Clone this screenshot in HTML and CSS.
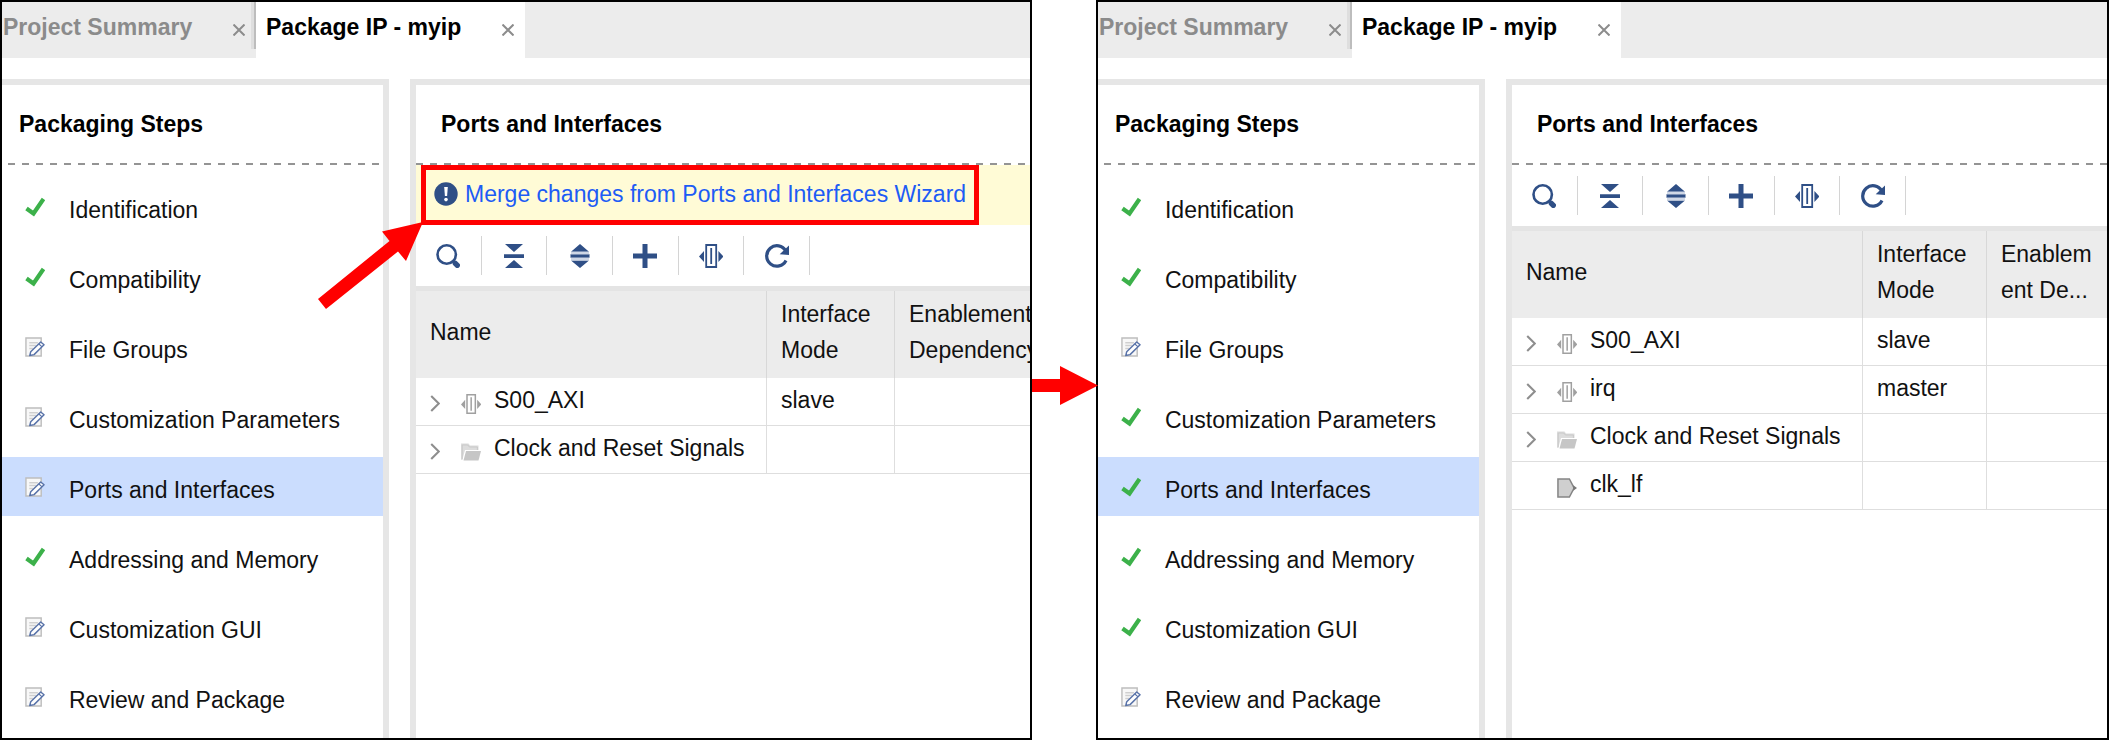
FILE: index.html
```html
<!DOCTYPE html>
<html lang="en">
<head>
<meta charset="utf-8">
<title>Package IP - myip</title>
<link rel="stylesheet" href="styles.css">
</head>
<body>
<svg class="sprite" aria-hidden="true">
  <symbol id="i-close" viewBox="0 0 12 12"><path d="M.5 .5l11 11M11.500 .5L.5 11.500" fill="none" stroke="#8c8c8c" stroke-width="2"/></symbol>
  <symbol id="i-check" viewBox="0 0 20 20"><path d="M1.500 11.500L8.500 16.500L18.500 2" fill="none" stroke="#3cb14a" stroke-width="4.200"/></symbol>
  <symbol id="i-edit" viewBox="0 0 21 21"><path d="M1 1h16v19H1z" fill="#f8f8f8" stroke="#bdbdbd" stroke-width="1.500"/><path d="M4.500 6h9M4.500 9h7M4.500 12h4" stroke="#cfcfcf" stroke-width="1.500"/><path d="M16.500 5.200L20 8.200L9.500 18.500L5 19.500L6 15.500z" fill="#fff" stroke="#5872a8" stroke-width="1.500" stroke-linejoin="round"/><path d="M14.500 7.300L18 10.300" stroke="#5872a8" stroke-width="1.200"/></symbol>
  <symbol id="i-info" viewBox="0 0 24 24"><circle cx="12" cy="12" r="11.700" fill="#2f4f86"/><path d="M10.200 5h3.600l-.7 9h-2.200z" fill="#fff"/><circle cx="12" cy="17.600" r="1.800" fill="#fff"/></symbol>
  <symbol id="i-search" viewBox="0 0 24 24"><circle cx="10.700" cy="10.500" r="9.200" fill="none" stroke="#2f4f86" stroke-width="2.600"/><path d="M19.300 19.300l2 2" stroke="#2f4f86" stroke-width="5.400" stroke-linecap="round"/></symbol>
  <symbol id="i-collapse" viewBox="0 0 24 24"><path d="M3 0h18l-9 8zM3 24h18l-9-8zM2 10.300h20v3.700H2z" fill="#2f4f86"/></symbol>
  <symbol id="i-expand" viewBox="0 0 24 24"><path d="M3 7.800L12 0l9 7.800zM3 16.400h18L12 24zM2.500 10.300h19v3.400h-19z" fill="#2f4f86"/><path d="M3 7.800h18v2.500H3zM3 13.700h18v2.700H3z" fill="#cfd7e6"/></symbol>
  <symbol id="i-plus" viewBox="0 0 24 24"><path d="M9.500 0h5v9.500H24v5h-9.500V24h-5v-9.500H0v-5h9.500z" fill="#2f4f86"/></symbol>
  <symbol id="i-port" viewBox="0 0 24 24"><path d="M7.200 1h10v22h-10z" fill="#fff" stroke="currentColor" stroke-width="1.800"/><path d="M12.200 4v16" stroke="currentColor" stroke-width="1.800"/><path d="M5 7v11L0 12.500zM19.400 7v11l5-5.500z" fill="currentColor"/></symbol>
  <symbol id="i-refresh" viewBox="0 0 24 24"><path d="M20.800 7A10.200 10.200 0 1 0 21 16.500" fill="none" stroke="#2f4f86" stroke-width="3.200"/><path d="M24 1.500V11l-9.300-.8z" fill="#2f4f86"/></symbol>
  <symbol id="i-chevron" viewBox="0 0 10 18"><path d="M1 1L9 9L1 17" fill="none" stroke="#8e8e8e" stroke-width="2.200"/></symbol>
  <symbol id="i-folder" viewBox="0 0 20 20"><path d="M0 18V1.500h7.500l1.500 2h8.500V8H4L1.500 17z" fill="#dcdcdc"/><path d="M1.200 17.500V3h5.600l1.600 2h8v3" fill="none" stroke="#c9c9c9"/><path d="M5 9h15l-2.500 9.500H2.500z" fill="#c6c6c6"/></symbol>
  <symbol id="i-pin" viewBox="0 0 21 21"><path d="M1 1h12l5 9.500l-5 9.500H1z" fill="#cfcfcf" stroke="#858585" stroke-width="1.600"/><path d="M17 7.500l4 3l-4 3z" fill="#777"/></symbol>
</svg>

<main class="stage">
  <section class="window before">
    <div class="tabs" role="tablist">
      <div class="tab idle" role="tab"><span>Project Summary</span><button class="close" aria-label="Close Project Summary"><svg><use href="#i-close"/></svg></button></div>
      <div class="tab current" role="tab" aria-selected="true"><span>Package IP - myip</span><button class="close" aria-label="Close Package IP"><svg><use href="#i-close"/></svg></button></div>
    </div>
    <div class="panels">
      <nav class="panel steps">
        <h2>Packaging Steps</h2>
        <ul>
          <li><button class="step"><svg><use href="#i-check"/></svg><span>Identification</span></button></li>
          <li><button class="step"><svg><use href="#i-check"/></svg><span>Compatibility</span></button></li>
          <li><button class="step"><svg><use href="#i-edit"/></svg><span>File Groups</span></button></li>
          <li><button class="step"><svg><use href="#i-edit"/></svg><span>Customization Parameters</span></button></li>
          <li><button class="step selected"><svg><use href="#i-edit"/></svg><span>Ports and Interfaces</span></button></li>
          <li><button class="step"><svg><use href="#i-check"/></svg><span>Addressing and Memory</span></button></li>
          <li><button class="step"><svg><use href="#i-edit"/></svg><span>Customization GUI</span></button></li>
          <li><button class="step"><svg><use href="#i-edit"/></svg><span>Review and Package</span></button></li>
        </ul>
      </nav>
      <section class="panel ports">
        <h2>Ports and Interfaces</h2>
        <div class="banner"><div class="callout"><svg><use href="#i-info"/></svg><a href="#merge">Merge changes from Ports and Interfaces Wizard</a></div></div>
        <div class="toolbar">
          <button aria-label="Search"><svg><use href="#i-search"/></svg></button>
          <button aria-label="Collapse all"><svg><use href="#i-collapse"/></svg></button>
          <button aria-label="Expand all"><svg><use href="#i-expand"/></svg></button>
          <button aria-label="Add"><svg><use href="#i-plus"/></svg></button>
          <button aria-label="Add bus interface"><svg><use href="#i-port"/></svg></button>
          <button aria-label="Refresh"><svg><use href="#i-refresh"/></svg></button>
        </div>
        <table>
          <colgroup><col class="c-name"><col class="c-mode"><col></colgroup>
          <thead><tr><th>Name</th><th>Interface<br>Mode</th><th>Enablement<br>Dependency</th></tr></thead>
          <tbody>
            <tr><td><div class="node"><button class="twist" aria-label="Expand S00_AXI"><svg><use href="#i-chevron"/></svg></button><svg><use href="#i-port"/></svg><span>S00_AXI</span></div></td><td>slave</td><td></td></tr>
            <tr><td><div class="node"><button class="twist" aria-label="Expand Clock and Reset Signals"><svg><use href="#i-chevron"/></svg></button><svg><use href="#i-folder"/></svg><span>Clock and Reset Signals</span></div></td><td></td><td></td></tr>
          </tbody>
        </table>
      </section>
    </div>
    <svg class="pointer" viewBox="0 0 106 88" aria-hidden="true"><path d="M0 77L71.500 19L64 9.500L105 0L88 39L80 29.500L8 87z" fill="#f00"/></svg>
  </section>

  <div class="link-arrow"><svg viewBox="0 0 66 39" aria-hidden="true"><path d="M0 13h28V0l38 19.500L28 39V26H0z" fill="#f00"/></svg></div>

  <section class="window after">
    <div class="tabs" role="tablist">
      <div class="tab idle" role="tab"><span>Project Summary</span><button class="close" aria-label="Close Project Summary"><svg><use href="#i-close"/></svg></button></div>
      <div class="tab current" role="tab" aria-selected="true"><span>Package IP - myip</span><button class="close" aria-label="Close Package IP"><svg><use href="#i-close"/></svg></button></div>
    </div>
    <div class="panels">
      <nav class="panel steps">
        <h2>Packaging Steps</h2>
        <ul>
          <li><button class="step"><svg><use href="#i-check"/></svg><span>Identification</span></button></li>
          <li><button class="step"><svg><use href="#i-check"/></svg><span>Compatibility</span></button></li>
          <li><button class="step"><svg><use href="#i-edit"/></svg><span>File Groups</span></button></li>
          <li><button class="step"><svg><use href="#i-check"/></svg><span>Customization Parameters</span></button></li>
          <li><button class="step selected"><svg><use href="#i-check"/></svg><span>Ports and Interfaces</span></button></li>
          <li><button class="step"><svg><use href="#i-check"/></svg><span>Addressing and Memory</span></button></li>
          <li><button class="step"><svg><use href="#i-check"/></svg><span>Customization GUI</span></button></li>
          <li><button class="step"><svg><use href="#i-edit"/></svg><span>Review and Package</span></button></li>
        </ul>
      </nav>
      <section class="panel ports">
        <h2>Ports and Interfaces</h2>
        <div class="toolbar">
          <button aria-label="Search"><svg><use href="#i-search"/></svg></button>
          <button aria-label="Collapse all"><svg><use href="#i-collapse"/></svg></button>
          <button aria-label="Expand all"><svg><use href="#i-expand"/></svg></button>
          <button aria-label="Add"><svg><use href="#i-plus"/></svg></button>
          <button aria-label="Add bus interface"><svg><use href="#i-port"/></svg></button>
          <button aria-label="Refresh"><svg><use href="#i-refresh"/></svg></button>
        </div>
        <table>
          <colgroup><col class="c-name"><col class="c-mode"><col></colgroup>
          <thead><tr><th>Name</th><th>Interface<br>Mode</th><th>Enablem<br>ent De...</th></tr></thead>
          <tbody>
            <tr><td><div class="node"><button class="twist" aria-label="Expand S00_AXI"><svg><use href="#i-chevron"/></svg></button><svg><use href="#i-port"/></svg><span>S00_AXI</span></div></td><td>slave</td><td></td></tr>
            <tr><td><div class="node"><button class="twist" aria-label="Expand irq"><svg><use href="#i-chevron"/></svg></button><svg><use href="#i-port"/></svg><span>irq</span></div></td><td>master</td><td></td></tr>
            <tr><td><div class="node"><button class="twist" aria-label="Expand Clock and Reset Signals"><svg><use href="#i-chevron"/></svg></button><svg><use href="#i-folder"/></svg><span>Clock and Reset Signals</span></div></td><td></td><td></td></tr>
            <tr><td><div class="node leaf"><svg><use href="#i-pin"/></svg><span>clk_lf</span></div></td><td></td><td></td></tr>
          </tbody>
        </table>
      </section>
    </div>
  </section>
</main>
</body>
</html>
```
FILE: styles.css
```css
* { box-sizing: border-box; }

body {
  margin: 0;
  background: #fff;
  color: #111;
  font: 23px/36px "Liberation Sans", Arial, sans-serif;
}

button {
  margin: 0;
  padding: 0;
  border: 0;
  background: none;
  color: inherit;
  font: inherit;
  text-align: left;
}

svg { display: block; flex: none; overflow: visible; }
.sprite { position: absolute; width: 0; height: 0; }

.stage { display: flex; min-height: 100vh; }

.window {
  position: relative;
  display: flex;
  flex-direction: column;
  min-width: 0;
  border: 2px solid #000;
  overflow: hidden;
}
.before { flex: 1032 1 0; }
.after { flex: 1013 1 0; }

.link-arrow { flex: none; width: 64px; padding-top: 366px; position: relative; z-index: 1; }
.link-arrow svg { width: 66px; height: 39px; }

.pointer { position: absolute; left: 316px; top: 220px; width: 106px; height: 88px; }

/* Tabs */
.tabs { display: flex; background: #ececec; }
.tab {
  display: flex;
  align-items: center;
  justify-content: space-between;
  height: 56px;
  padding-right: 11px;
  font-weight: bold;
  white-space: nowrap;
}
.tab span { padding-bottom: 6px; }
.idle {
  width: 254px;
  padding-left: 1px;
  color: #8b8b8b;
  background: linear-gradient(to right, #dedede 60%, #bdbdbd 60%) no-repeat right top / 5px 47px;
}
.current { width: 269px; padding-left: 10px; background: #fff; color: #000; }
.close svg { width: 12px; height: 12px; }

/* Panels */
.panels { display: flex; flex: 1; gap: 21px; padding-top: 21px; }
.panel { border-top: 6px solid #e6e6e6; }
.steps { flex: none; width: 387px; border-right: 6px solid #e6e6e6; }
.ports { flex: 1; min-width: 0; border-left: 6px solid #e6e6e6; }

h2 {
  margin: 0;
  padding: 21px 26px 23px 25px;
  color: #000;
  font-size: 23px;
  line-height: 36px;
  background: repeating-linear-gradient(to right, #949494 0 7px, transparent 7px 14px) no-repeat left bottom / 100% 2px;
}
.steps h2 { margin-left: 6px; padding-left: 11px; }

.steps ul {
  display: grid;
  gap: 11px;
  margin: 0;
  padding: 12px 0 0;
  list-style: none;
}
.step {
  display: flex;
  align-items: center;
  gap: 24px;
  width: 100%;
  padding-left: 23px;
}
.step svg { width: 20px; height: 20px; }
.step span { padding: 15px 0 8px; }
.selected { background: #cbddfe; }

.banner { display: flex; padding-left: 5px; background: #fffbd6; }
.callout {
  display: flex;
  align-items: center;
  gap: 7px;
  padding: 6px 8px 8px 8px;
  border: 5px solid #f00;
  white-space: nowrap;
}
.callout svg { width: 24px; height: 24px; }
.callout a { color: #1d5cf5; text-decoration: none; }

.toolbar { display: flex; width: 394px; padding: 11px 0; }
.toolbar button {
  display: flex;
  flex: 1;
  align-items: center;
  justify-content: center;
  height: 39px;
  border-right: 1px solid #d4d4d4;
  color: #2f4f86;
}
.toolbar svg { width: 24px; height: 24px; }

/* Interface table */
table {
  width: 100%;
  table-layout: fixed;
  border-collapse: separate;
  border-spacing: 0;
  border-top: 5px solid #e4e4e4;
}
.c-name { width: 351px; }
.before .c-mode { width: 128px; }
.after .c-mode { width: 124px; }

th {
  padding: 5px 0 10px 14px;
  border-right: 1px solid #d8d8d8;
  background: #ececec;
  font-weight: normal;
  text-align: left;
  white-space: nowrap;
}
td {
  height: 48px;
  padding: 4px 0 7px 14px;
  border-right: 1px solid #dedede;
  border-bottom: 1px solid #dedede;
  vertical-align: top;
}
th:last-child, td:last-child { border-right: 0; }
td:first-child { padding: 4px 0 0 14px; }

.node { display: flex; align-items: center; height: 43px; color: #111; }
.node > svg { width: 20px; height: 20px; margin-right: 13px; color: #a0a0a0; }
.node span { align-self: flex-start; }
.twist { margin-right: 21px; }
.twist svg { width: 10px; height: 17px; }
.leaf { padding-left: 31px; }
```
